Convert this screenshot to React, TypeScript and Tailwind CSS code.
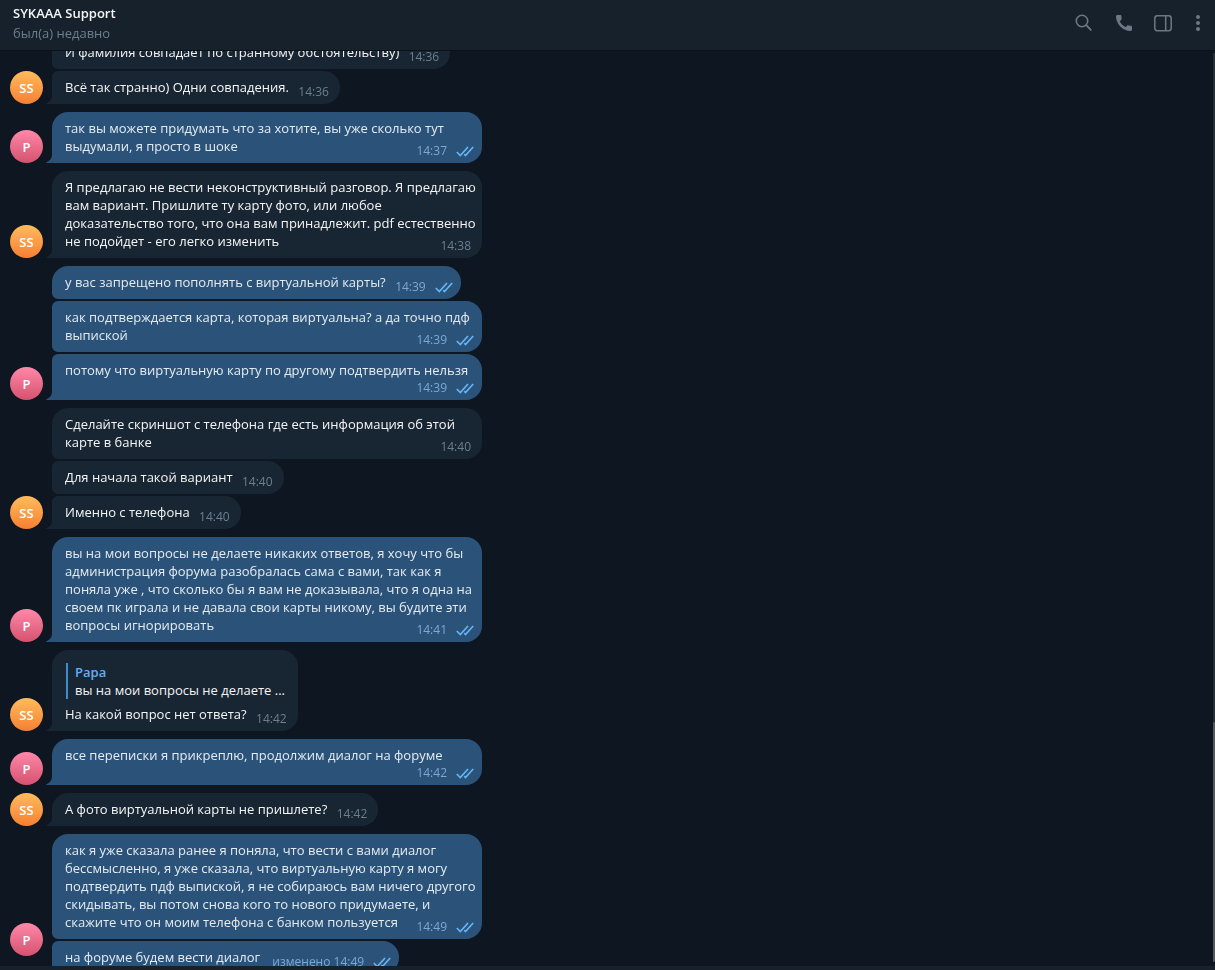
type Message = {
  text: string;
  time: string;
  edited?: boolean;
  reply?: { author: string; text: string };
};

type Group = {
  from: "support" | "papa";
  messages: Message[];
};

const groups: Group[] = [
  {
    from: "support",
    messages: [
      { text: "И фамилия совпадает по странному обстоятельству)", time: "14:36" },
      { text: "Всё так странно) Одни совпадения.", time: "14:36" },
    ],
  },
  {
    from: "papa",
    messages: [
      {
        text: "так вы можете придумать что за хотите, вы уже сколько тут выдумали, я просто в шоке",
        time: "14:37",
      },
    ],
  },
  {
    from: "support",
    messages: [
      {
        text: "Я предлагаю не вести неконструктивный разговор. Я предлагаю вам вариант. Пришлите ту карту фото, или любое доказательство того, что она вам принадлежит. pdf естественно не подойдет - его легко изменить",
        time: "14:38",
      },
    ],
  },
  {
    from: "papa",
    messages: [
      { text: "у вас запрещено пополнять с виртуальной карты?", time: "14:39" },
      {
        text: "как подтверждается карта, которая виртуальна? а да точно пдф выпиской",
        time: "14:39",
      },
      { text: "потому что виртуальную карту по другому подтвердить нельзя", time: "14:39" },
    ],
  },
  {
    from: "support",
    messages: [
      {
        text: "Сделайте скриншот с телефона где есть информация об этой карте в банке",
        time: "14:40",
      },
      { text: "Для начала такой вариант", time: "14:40" },
      { text: "Именно с телефона", time: "14:40" },
    ],
  },
  {
    from: "papa",
    messages: [
      {
        text: "вы на мои вопросы не делаете никаких ответов, я хочу что бы администрация форума разобралась сама с вами, так как я поняла уже , что сколько бы я вам не доказывала, что я одна на своем пк играла и не давала свои карты никому, вы будите эти вопросы игнорировать",
        time: "14:41",
      },
    ],
  },
  {
    from: "support",
    messages: [
      {
        text: "На какой вопрос нет ответа?",
        time: "14:42",
        reply: { author: "Papa", text: "вы на мои вопросы не делаете ..." },
      },
    ],
  },
  {
    from: "papa",
    messages: [{ text: "все переписки я прикреплю, продолжим диалог на форуме", time: "14:42" }],
  },
  {
    from: "support",
    messages: [{ text: "А фото виртуальной карты не пришлете?", time: "14:42" }],
  },
  {
    from: "papa",
    messages: [
      {
        text: "как я уже сказала ранее я поняла, что вести с вами диалог бессмысленно, я уже сказала, что виртуальную карту я могу подтвердить пдф выпиской, я не собираюсь вам ничего другого скидывать, вы потом снова кого то нового придумаете, и скажите что он моим телефона с банком пользуется",
        time: "14:49",
      },
      { text: "на форуме будем вести диалог", time: "14:49", edited: true },
    ],
  },
];

function Ticks() {
  return (
    <svg
      width="18"
      height="11"
      viewBox="0 0 18 11"
      fill="none"
      stroke="#64b5f6"
      strokeWidth="1.7"
      aria-label="Прочитано"
      className="shrink-0"
    >
      <path d="M0.8 6 L4.3 9.5 L12 1" />
      <path d="M8.3 8.2 L9.5 9.5 L17.2 1" />
    </svg>
  );
}

function Avatar({ from }: { from: Group["from"] }) {
  const colors =
    from === "support" ? "from-[#ffbb5c] to-[#f57f32]" : "from-[#ff88a9] to-[#d4526f]";
  return (
    <div
      className={`sticky bottom-[10px] flex size-[33px] shrink-0 items-center justify-center rounded-full bg-linear-to-b text-[13px] font-semibold text-white ${colors}`}
    >
      {from === "support" ? "SS" : "P"}
    </div>
  );
}

function Bubble({
  message,
  outgoing,
  first,
  last,
}: {
  message: Message;
  outgoing: boolean;
  first: boolean;
  last: boolean;
}) {
  const { text, time, edited, reply } = message;
  const tone = outgoing ? "bg-[#2b5278] text-[#e4ecf2]" : "bg-[#182533] text-[#f5f5f5]";
  const topLeft = first ? "rounded-tl-[16px]" : "rounded-tl-[6px]";
  const bottomLeft = last ? "" : "rounded-bl-[6px]";
  // keeps room for the time at the end of the last line
  const room = edited ? "w-[137px]" : outgoing ? "w-[73px]" : "w-[49px]";

  return (
    <div
      className={`relative max-w-[430px] rounded-r-[16px] pt-[7px] pr-0.5 pb-[3px] pl-[13px] ${tone} ${topLeft} ${bottomLeft}`}
    >
      {last && (
        <svg
          width="6"
          height="8"
          viewBox="0 0 6 8"
          className={`absolute bottom-0 -left-[6px] ${outgoing ? "fill-[#2b5278]" : "fill-[#182533]"}`}
        >
          <path d="M6 0 C5.8 3.6 3.6 6 0.4 7.2 C0 7.4 0 8 0.6 8 H6 Z" />
        </svg>
      )}
      {reply && (
        <div className="mt-[6px] mb-[6px] ml-px w-0 min-w-full border-l-2 border-[#3f8ecc] pl-[7px]">
          <div className="font-semibold text-[#62b0f5]">{reply.author}</div>
          <div className="truncate">{reply.text}</div>
        </div>
      )}
      <p className="flow-root">
        {text}
        <span className={`float-right h-[13px] ${room}`} />
      </p>
      <div
        className={`-mt-[13px] flex items-center justify-end gap-[9px] text-xs leading-[18px] whitespace-nowrap ${
          outgoing ? "pr-[6px] text-[#7da8d3]" : "pr-[9px] text-[#6d7f8f]"
        }`}
      >
        <time>{edited ? `изменено ${time}` : time}</time>
        {outgoing && <Ticks />}
      </div>
    </div>
  );
}

function Header() {
  return (
    <header className="z-10 flex h-[50px] shrink-0 items-start justify-between bg-[#17212b] pr-[7px] pl-[13px] shadow-[0_1px_0_#0b121a]">
      <div className="pt-[3px]">
        <h1 className="font-semibold leading-5 text-[#f5f5f5]">SYKAAA Support</h1>
        <p className="leading-5 text-[#6d7f8f]">был(а) недавно</p>
      </div>
      <div className="flex items-center pt-[11px] text-[#6c7883]">
        <button aria-label="Поиск" className="mr-4 p-0.5">
          <svg width="20" height="20" viewBox="0 0 20 20" fill="none" stroke="currentColor" strokeWidth="1.6">
            <circle cx="8" cy="8" r="5.7" />
            <path d="M12.2 12.2 L17.3 17.3" strokeWidth="1.9" />
          </svg>
        </button>
        <button aria-label="Позвонить" className="mr-[15px] p-0.5">
          <svg width="20" height="20" viewBox="0 0 20 20" fill="currentColor">
            <path d="M3.4 2 H6.2 C7 2 7.4 2.4 7.4 3.1 L7.6 5.6 C7.6 6.2 7.5 6.5 7.1 6.9 L5.7 8.3 C6.9 10.8 9.1 13 11.7 14.2 L13 12.8 C13.4 12.4 13.8 12.3 14.3 12.4 L17 12.8 C17.7 12.9 18 13.3 18 14 V16.6 C18 17.6 17.4 18 16.5 18 C9 17.8 2.2 11.4 2 3.5 C2 2.6 2.5 2 3.4 2 Z" />
          </svg>
        </button>
        <button aria-label="Информация" className="mr-[13px] p-0.5">
          <svg width="20" height="20" viewBox="0 0 20 20" fill="none" stroke="currentColor" strokeWidth="1.5">
            <rect x="1.8" y="2.8" width="16.4" height="14.9" rx="2.6" />
            <path d="M12.7 3 V17.5" />
          </svg>
        </button>
        <button aria-label="Меню" className="p-0.5">
          <svg width="16" height="20" viewBox="0 0 16 20" fill="currentColor">
            <circle cx="8" cy="4" r="2" />
            <circle cx="8" cy="10" r="2" />
            <circle cx="8" cy="16" r="2" />
          </svg>
        </button>
      </div>
    </header>
  );
}

export default function App() {
  return (
    <div className="flex h-screen flex-col bg-[#0e1621] font-['Open_Sans','Noto_Sans',sans-serif] text-[13px] leading-[18px]">
      <Header />
      <div className="flex min-h-0 flex-1">
        <main className="min-w-0 flex-1 overflow-hidden pl-[10px]">
          <div className="-mt-[14px] flex flex-col gap-2">
            {groups.map((group, g) => (
              <section key={g} className="flex items-end gap-[9px]">
                <Avatar from={group.from} />
                <div className="flex min-w-0 flex-col items-start gap-0.5">
                  {group.messages.map((message, i) => (
                    <Bubble
                      key={i}
                      message={message}
                      outgoing={group.from === "papa"}
                      first={i === 0}
                      last={i === group.messages.length - 1}
                    />
                  ))}
                </div>
              </section>
            ))}
          </div>
        </main>
        {/* scrollbar */}
        <div className="mt-[3px] mb-1 flex w-0.5 flex-col justify-end rounded-full bg-[#282f39]">
          <div className="h-[240px] rounded-full bg-[#53595f]" />
        </div>
      </div>
      <footer className="h-1 shrink-0 bg-[#17212b]" />
    </div>
  );
}
